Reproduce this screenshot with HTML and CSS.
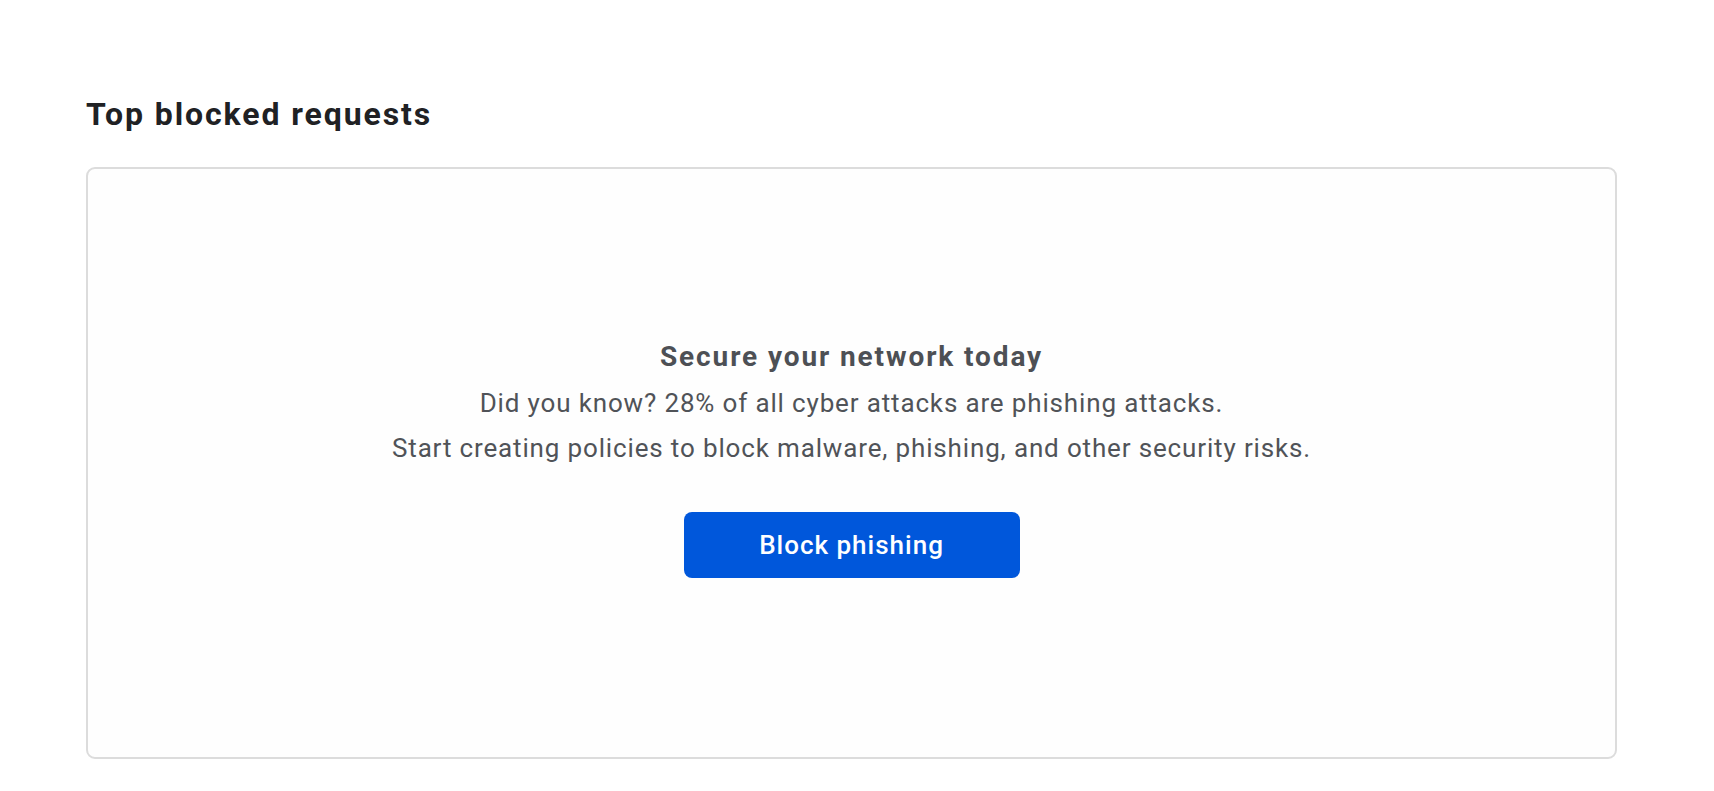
FILE: index.html
```html
<!DOCTYPE html>
<html lang="en">
<head>
<meta charset="utf-8">
<title>Top blocked requests</title>
<link rel="stylesheet" href="styles.css">
</head>
<body>
<main class="page">
  <h2 class="section-title">Top blocked requests</h2>
  <section class="card">
    <div class="empty">
      <h3 class="empty-title">Secure your network today</h3>
      <p class="empty-text">Did you know? 28% of all cyber attacks are phishing attacks.</p>
      <p class="empty-text">Start creating policies to block malware, phishing, and other security risks.</p>
      <button class="btn-primary" type="button">Block phishing</button>
    </div>
  </section>
</main>
</body>
</html>
```

FILE: styles.css
```css
html, body {
  margin: 0;
  padding: 0;
  background: #ffffff;
}

body {
  font-family: Roboto, "Liberation Sans", Arial, sans-serif;
  color: #212121;
}

.page {
  padding: 94px 97px 0 86px;
}

.section-title {
  margin: 0 0 33px 0;
  font-size: 32px;
  line-height: 40px;
  font-weight: 700;
  letter-spacing: 1.9px;
  color: #202124;
}

.card {
  border: 2px solid #dcdcdc;
  border-radius: 9px;
  background: #fefefe;
  padding: 170px 0 179px 0;
}

.empty {
  display: flex;
  flex-direction: column;
  align-items: center;
  text-align: center;
}

.empty-title {
  margin: 0 0 6px 0;
  font-size: 28px;
  line-height: 36px;
  font-weight: 700;
  letter-spacing: 1.9px;
  color: #4d5055;
}

.empty-text {
  margin: 0;
  font-size: 26px;
  line-height: 44px;
  font-weight: 400;
  letter-spacing: 0.85px;
  color: #505358;
}

.empty-text + .empty-text {
  margin-top: 1px;
}

.btn-primary {
  margin-top: 42px;
  width: 336px;
  height: 66px;
  border: none;
  border-radius: 8px;
  background: #0057db;
  color: #ffffff;
  font-family: Roboto, "Liberation Sans", Arial, sans-serif;
  font-size: 26px;
  font-weight: 500;
  letter-spacing: 1px;
  cursor: pointer;
}
```
